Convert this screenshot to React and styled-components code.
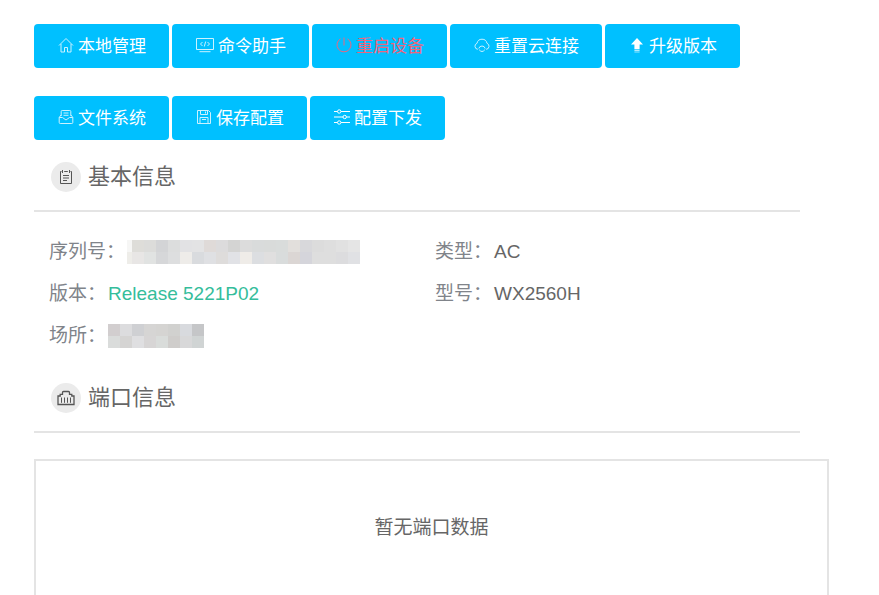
import styled, { createGlobalStyle } from "styled-components"

const GlobalStyle = createGlobalStyle`
   * {
      box-sizing: border-box;
   }
   body {
      margin: 0;
      background: #fff;
      color: #666;
      font-family: "Liberation Sans", "Noto Sans CJK SC", sans-serif;
   }
`

const Page = styled.main`
   min-height: 100vh;
   padding: 24px 50px 0 34px;
   display: flex;
   flex-direction: column;
`

const Toolbar = styled.div`
   display: flex;
   flex-wrap: wrap;
   gap: 28px 3px;
`

const Icon = styled.svg`
   width: ${({ $wide }) => ($wide ? "18px" : "16px")};
   height: 16px;
   flex: none;
   fill: none;
   stroke: currentColor;
   stroke-width: 1;
   opacity: ${({ $soft }) => ($soft ? 0.8 : 1)};
`

const ToolButton = styled.button`
   height: 44px;
   padding: 2px 23px 0 24px;
   border: 0;
   border-radius: 4px;
   background: #00c0ff;
   color: ${({ $danger }) => ($danger ? "#f0647d" : "#fff")};
   font-family: inherit;
   font-size: 17px;
   line-height: 24px;
   display: flex;
   align-items: center;
   gap: 4px;
   cursor: pointer;
   ${Icon} {
      margin-bottom: 4px;
   }
`

const SectionHeader = styled.header`
   height: 72px;
   margin-right: 29px;
   padding: 4px 0 0 17px;
   border-bottom: 2px solid #e4e4e4;
   display: flex;
   align-items: center;
   gap: 7px;
`

const IconCircle = styled.span`
   width: 30px;
   height: 30px;
   border-radius: 50%;
   background: #ebebeb;
   color: #555;
   display: flex;
   align-items: center;
   justify-content: center;
`

const SectionTitle = styled.h2`
   margin: 0;
   font-size: 22px;
   font-weight: 400;
   line-height: 32px;
`

const InfoGrid = styled.dl`
   margin: 0;
   padding: 19px 8px 4px 15px;
   display: grid;
   grid-template-columns: 1fr 1fr;
`

const InfoItem = styled.div`
   grid-column: ${({ $column }) => $column};
   display: flex;
   align-items: center;
   font-size: 19px;
   line-height: 42px;
`

const InfoLabel = styled.dt`
   color: #80848a;
`

const InfoValue = styled.dd`
   margin: 0 0 0 2px;
   color: ${({ $highlight }) => ($highlight ? "#35bd9b" : "#666")};
   display: flex;
`

const PortPanel = styled.section`
   flex: 1;
   min-height: 134px;
   margin-top: 26px;
   padding-top: 52px;
   border: 2px solid #e4e4e4;
   border-bottom: 0;
   text-align: center;
   font-size: 19px;
   line-height: 30px;
`

const HomeIcon = () => (
   <Icon viewBox="0 0 16 16" $soft>
      <path d="M1 8.5 8 1.5l7 7M3 7v8h3.5v-4.5h3V15H13V7" />
   </Icon>
)

const CommandIcon = () => (
   <Icon viewBox="0 0 18 16" $wide $soft>
      <path d="M.5 1.5h17v11H.5zM3.5 14.7h11M6.5 5l-2 2 2 2M11.5 5l2 2-2 2M9.7 4.5l-1.4 5" />
   </Icon>
)

const PowerIcon = () => (
   <Icon viewBox="0 0 16 16">
      <path d="M8 .5v8M4.5 1.8a7 7 0 1 0 7 0" />
   </Icon>
)

const CloudIcon = () => (
   <Icon viewBox="0 0 16 16" $soft>
      <path d="M3.8 12.3a3.1 3.1 0 0 1-.8-6 5.1 5.1 0 0 1 10 0 3.1 3.1 0 0 1-.8 6M4.8 11.5a3.3 3.3 0 0 1 6.4 0M5.2 12.8q2.8 3.4 5.6 0" />
   </Icon>
)

const UpgradeIcon = () => (
   <Icon viewBox="0 0 16 16">
      <path fill="currentColor" stroke="none" d="M8 1 2 7.5h3.4V12h5.2V7.5H14z" />
      <path d="M5.4 13.2h5.2" />
      <path d="M5.4 15h5.2" opacity="0.6" />
   </Icon>
)

const FileIcon = () => (
   <Icon viewBox="0 0 16 16" $soft>
      <path d="M3.2 7V2.5q0-1 1-1h7.6q1 0 1 1V7M3 6 1.2 8.5v5q0 1 1 1h11.6q1 0 1-1v-5L13 6M1.2 8.5h3.3L8 11l3.5-2.5h3.3M5.5 4h5M5.5 6.3h5" />
   </Icon>
)

const SaveIcon = () => (
   <Icon viewBox="0 0 16 16" $soft>
      <path d="M1.5 1.5h11l2 2v11h-13zM4.5 1.5v4h7v-4M9.5 2.5v2M4 14.5v-6h8v6M6 10.5h4" />
   </Icon>
)

const SlidersIcon = () => (
   <Icon viewBox="0 0 16 16">
      <path d="M0 2.5h3.5M7 2.5h9M0 8h9M12.5 8H16M0 13.5h3.5M7 13.5h9" />
      <circle cx="5.2" cy="2.5" r="1.7" />
      <circle cx="10.7" cy="8" r="1.7" />
      <circle cx="5.2" cy="13.5" r="1.7" />
   </Icon>
)

const ClipboardIcon = () => (
   <Icon viewBox="0 0 16 16">
      <path d="M3.5 2.5h-1v12h11v-12h-1M4.5 1v3M11.5 1v3M6.2 2.5h3.6M5 6.5h6M5 9h6M5 11.5h4" />
   </Icon>
)

const PortIcon = () => (
   <Icon viewBox="0 0 18 16" $wide>
      <path
         strokeWidth="1.3"
         d="M1 14.5V6h2.2V4.3h2.3V2.5q0-1 1-1h5q1 0 1 1v1.8h2.3V6H17v8.5z"
      />
      <path d="M4.5 7.5v5.3M7.5 7.5v5.3M10.5 7.5v5.3M13.5 7.5v5.3" />
   </Icon>
)

const serialMask = [
   ["#f6f6f5", "#deddd9", "#dcdcda", "#d3d4d6", "#dcdddd", "#e2e2e4", "#e3e3e4", "#dfdad8", "#dcdbdc", "#d4d4d3", "#dcdcdc", "#d9dbdb", "#d9dbda", "#d9dcdb", "#e2dfdc", "#d8d8db", "#dcdcdc", "#dedede", "#e1e1e1", "#e5e5e5"],
   ["#eeede9", "#e8e6e5", "#e1e3e2", "#d6d7d9", "#dddedf", "#eeece9", "#d9dbde", "#dfe0e3", "#dedcdb", "#e1e2e6", "#efece8", "#dcdee1", "#e0dfdf", "#d9dcdc", "#dbd6d4", "#d5d5db", "#dedede", "#dedede", "#dcdcde", "#e0e1e4"],
]

const siteMask = [
   ["#d2cecf", "#dcdcde", "#cfd0d3", "#d6d5d4", "#d5d4d2", "#d1d1cf", "#d8dade", "#c5c6c8"],
   ["#dadcdb", "#d5d4d3", "#dfdfe1", "#d7d5d5", "#d9dcda", "#cfcdcb", "#d8d8d9", "#d0d4d4"],
]

// first column of cells may be narrower than the rest
const Mask = ({ rows, first = 12 }) => (
   <svg width={first + (rows[0].length - 1) * 12} height="24" aria-hidden="true">
      {rows.map((row, y) =>
         row.map((fill, x) => (
            <rect
               key={`${x}-${y}`}
               x={x === 0 ? 0 : first + (x - 1) * 12}
               y={y * 12}
               width={x === 0 ? first : 12}
               height="12"
               fill={fill}
            />
         ))
      )}
   </svg>
)

const actions = [
   { text: "本地管理", icon: HomeIcon },
   { text: "命令助手", icon: CommandIcon },
   { text: "重启设备", icon: PowerIcon, danger: true },
   { text: "重置云连接", icon: CloudIcon },
   { text: "升级版本", icon: UpgradeIcon },
   { text: "文件系统", icon: FileIcon },
   { text: "保存配置", icon: SaveIcon },
   { text: "配置下发", icon: SlidersIcon },
]

const info = [
   { label: "序列号", value: <Mask rows={serialMask} first={5} />, column: 1 },
   { label: "类型", value: "AC", column: 2 },
   { label: "版本", value: "Release 5221P02", column: 1, highlight: true },
   { label: "型号", value: "WX2560H", column: 2 },
   { label: "场所", value: <Mask rows={siteMask} />, column: 1 },
]

const Section = ({ title, icon: SectionIcon }) => (
   <SectionHeader>
      <IconCircle>
         <SectionIcon />
      </IconCircle>
      <SectionTitle>{title}</SectionTitle>
   </SectionHeader>
)

const App = () => {
   return (
      <>
         <GlobalStyle />
         <Page>
            <Toolbar>
               {actions.map(({ text, icon: ActionIcon, danger }) => (
                  <ToolButton key={text} type="button" $danger={danger}>
                     <ActionIcon />
                     {text}
                  </ToolButton>
               ))}
            </Toolbar>
            <Section title="基本信息" icon={ClipboardIcon} />
            <InfoGrid>
               {info.map(({ label, value, column, highlight }) => (
                  <InfoItem key={label} $column={column}>
                     <InfoLabel>{label}：</InfoLabel>
                     <InfoValue $highlight={highlight}>{value}</InfoValue>
                  </InfoItem>
               ))}
            </InfoGrid>
            <Section title="端口信息" icon={PortIcon} />
            <PortPanel>暂无端口数据</PortPanel>
         </Page>
      </>
   )
}

export default App
